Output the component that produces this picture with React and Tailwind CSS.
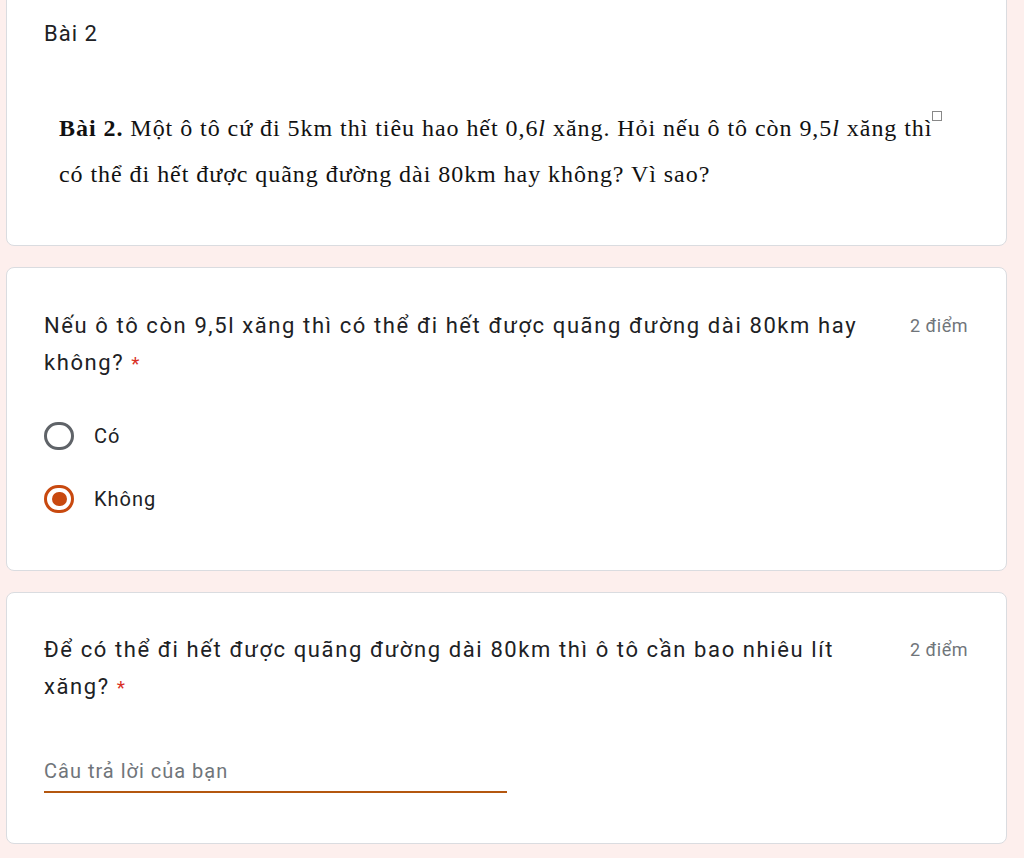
import React from 'react';

function Radio({ checked, label }) {
  return (
    <div className="flex items-center h-[30px]">
      {checked ? (
        <span className="w-[30px] h-[28px] rounded-full border-[3px] border-[#c8490f] flex items-center justify-center">
          <span className="w-[15px] h-[14px] rounded-full bg-[#c8490f]" />
        </span>
      ) : (
        <span className="w-[30px] h-[28px] rounded-full border-[3px] border-[#5f6368]" />
      )}
      <span className="ml-[20px] text-[20px] tracking-[1px] text-[#202124]">{label}</span>
    </div>
  );
}

function Question({ children }) {
  return (
    <div className="flex items-start justify-between">
      <div className="w-[840px] text-[22px] leading-[37px] text-[#202124] tracking-[1.6px]">
        {children}
        <span className="ml-[7px] tracking-normal text-[19px] leading-none text-[#d93025]">*</span>
      </div>
      <div className="pt-[2px] pr-[1px] text-[18px] leading-[34px] tracking-[0.5px] text-[#70757a]">2 điểm</div>
    </div>
  );
}

export default function App() {
  return (
    <div className="min-h-[858px] bg-[#fdefed] px-[6px] pr-[17px] overflow-hidden" style={{ fontFamily: 'Roboto, "Noto Sans", sans-serif' }}>
      {/* Section header */}
      <div className="-mt-[8px] bg-white rounded-lg border border-[#dadce0] px-[37px] pt-[27px] pb-[48px]">
        <div className="text-[22px] leading-[28px] tracking-[1px] text-[#202124]">Bài 2</div>
        <p
          className="mt-[57px] ml-[15px] text-[24px] leading-[46px] tracking-[0.95px] text-[#111]"
          style={{ fontFamily: '"Liberation Serif", "Times New Roman", serif' }}
        >
          <b>Bài 2.</b> Một ô tô cứ đi 5km thì tiêu hao hết 0,6<i>l</i> xăng. Hỏi nếu ô tô còn 9,5<i>l</i> xăng thì
          <span className="inline-block align-top mt-[6px] w-[10px] h-[10px] border border-[#888]" />
          <br />
          có thể đi hết được quãng đường dài 80km hay không? Vì sao?
        </p>
      </div>

      {/* Question 1 */}
      <div className="mt-[21px] bg-white rounded-lg border border-[#dadce0] px-[37px] pt-[39px] pb-[56px]">
        <Question>Nếu ô tô còn 9,5l xăng thì có thể đi hết được quãng đường dài 80km hay không?</Question>
        <div className="mt-[40px] flex flex-col gap-[33px]">
          <Radio label="Có" />
          <Radio checked label="Không" />
        </div>
      </div>

      {/* Question 2 */}
      <div className="mt-[21px] bg-white rounded-lg border border-[#dadce0] px-[37px] pt-[38px] pb-[50px]">
        <Question>Để có thể đi hết được quãng đường dài 80km thì ô tô cần bao nhiêu lít xăng?</Question>
        <div className="mt-[52px] w-[463px] border-b-2 border-[#b4570f] pb-[6px]">
          <span className="text-[20px] leading-[28px] tracking-[1px] text-[#70757a]">Câu trả lời của bạn</span>
        </div>
      </div>
    </div>
  );
}
